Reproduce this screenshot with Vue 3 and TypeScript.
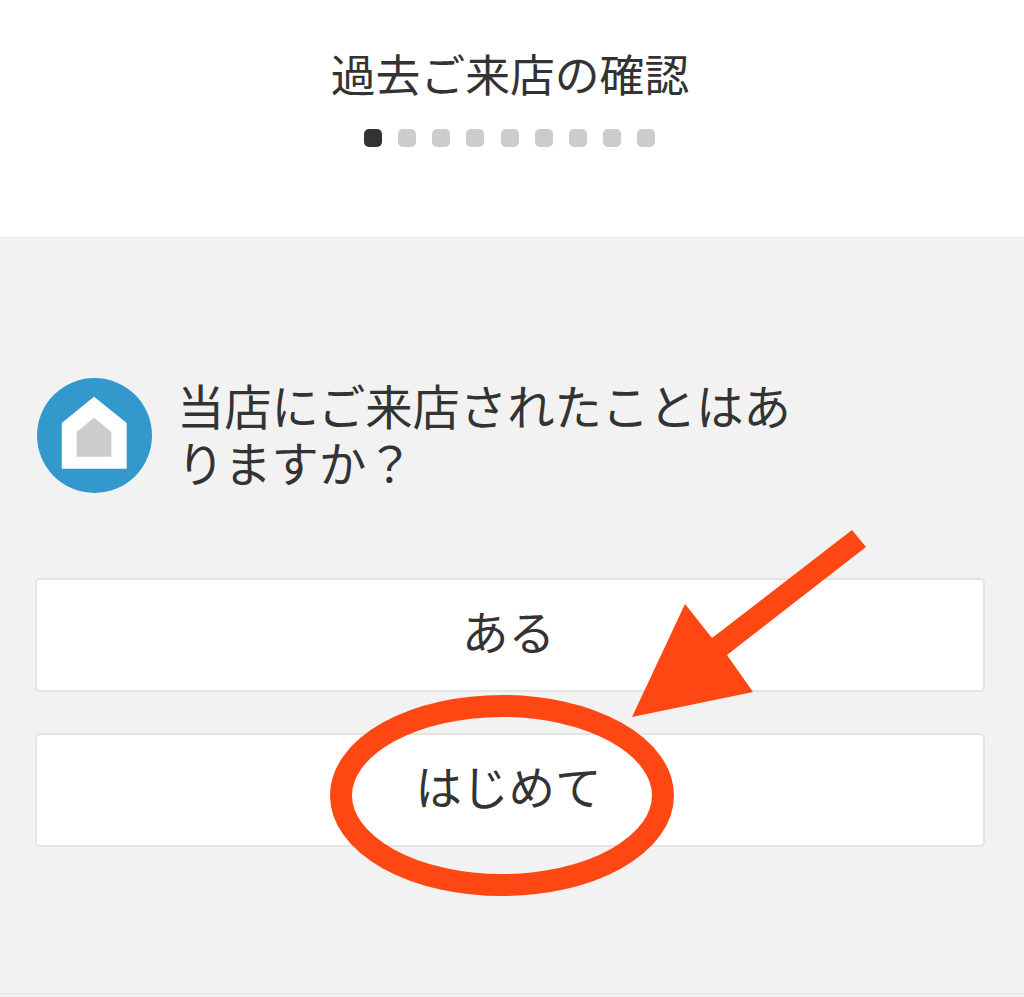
<script setup lang="ts">
const dots: number[] = [0, 1, 2, 3, 4, 5, 6, 7, 8]
const answers: string[] = ['ある', 'はじめて']
</script>

<template>
  <div class="page">
    <header class="head">
      <h1 class="title">過去ご来店の確認</h1>
      <div class="dots">
        <span v-for="d in dots" :key="d" class="dot" :class="{ on: d === 0 }"></span>
      </div>
    </header>
    <main class="body">
      <div class="question">
        <svg class="icon" viewBox="0 0 116 116" aria-hidden="true">
          <circle cx="58" cy="58" r="58" fill="#3399cc" />
          <path d="M57.500 19 L90.500 45.500 V91.500 H25 V45.500 Z" fill="#fff" />
          <path d="M57.500 40 L75 54.500 V79.500 H40 V54.500 Z" fill="#cccccc" />
        </svg>
        <p class="text">当店にご来店されたことはありますか？</p>
      </div>
      <div class="answers">
        <button v-for="a in answers" :key="a" class="answer" type="button"><span class="label">{{ a }}</span></button>
      </div>
    </main>
    <svg class="mark" viewBox="0 0 1024 997" aria-hidden="true">
      <ellipse cx="502" cy="795.500" rx="161" ry="89.500" fill="none" stroke="#ff4713" stroke-width="22" />
      <path d="M852 530 L866 547 L727 655 L753 692 L632 717 L685 604 L712 638 Z" fill="#ff4713" />
    </svg>
  </div>
</template>

<style scoped>
.page {
  position: relative;
  width: 1024px;
  height: 997px;
  overflow: hidden;
  background: #f2f2f2;
  color: #333;
  font-family: "Noto Sans CJK JP", "Noto Sans", sans-serif;
}
.head {
  box-sizing: border-box;
  height: 238px;
  padding-top: 43px;
  background: #fff;
  border-bottom: 1px solid #e6e6e6;
  display: flex;
  flex-direction: column;
  align-items: center;
}
.title {
  margin: 0 0 0 -4px;
  font-size: 44.800px;
  font-weight: 400;
  line-height: 60px;
}
.dots {
  display: flex;
  gap: 16.100px;
  margin-top: 26px;
  margin-left: -5px;
}
.dot {
  width: 18px;
  height: 18px;
  border-radius: 5px;
  background: #cccccc;
}
.dot.on {
  background: #333;
}
.body {
  box-sizing: border-box;
  height: 756px;
  padding: 140px 39px 0 35px;
  border-bottom: 1px solid #e6e6e6;
}
.question {
  display: flex;
  align-items: flex-start;
  gap: 25px;
  padding-left: 2px;
}
.icon {
  flex: none;
  width: 115px;
  height: 115px;
}
.text {
  margin: -2px 0 0;
  width: 625px;
  font-size: 47.300px;
  line-height: 57px;
}
.answers {
  display: flex;
  flex-direction: column;
  gap: 41px;
  margin-top: 85px;
}
.answer {
  box-sizing: border-box;
  height: 114px;
  background: #fff;
  border: 2px solid #e4e4e4;
  border-radius: 5px;
  color: #333;
  font: inherit;
  font-size: 46.500px;
  padding: 0 0 12px;
}
.label {
  display: inline-block;
  margin-left: -3px;
}
.mark {
  position: absolute;
  inset: 0;
  width: 1024px;
  height: 997px;
  pointer-events: none;
}
</style>
